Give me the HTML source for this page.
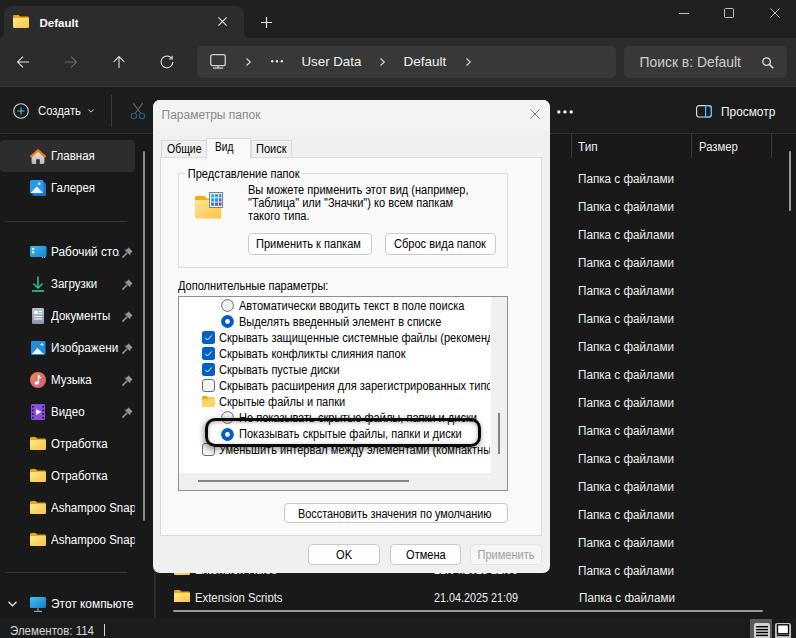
<!DOCTYPE html>
<html><head><meta charset="utf-8">
<style>
*{box-sizing:border-box;margin:0;padding:0}
html,body{width:796px;height:638px;overflow:hidden;background:#1c1c1c;font-family:"Liberation Sans",sans-serif;color:#fff}
.a{position:absolute}
.t{position:absolute;white-space:nowrap;line-height:1}
svg{position:absolute;overflow:visible}
#titlebar{left:0;top:0;width:796px;height:38px;background:#202020}
#tab{left:4px;top:6px;width:240px;height:32px;background:#2c2c2c;border-radius:8px 8px 0 0}
#nav{left:0;top:38px;width:796px;height:48px;background:#2c2c2c}
#addr{left:197px;top:46px;width:419px;height:32px;background:#383838;border-radius:5px}
#search{left:624px;top:46px;width:163px;height:32px;background:#383838;border-radius:5px}
#sepline{left:0;top:85.5px;width:796px;height:1.2px;background:#3c3c3c}
#toolline{left:0;top:133px;width:796px;height:1px;background:#2f2f2f}
.side{font-size:12.5px;color:#fff;transform:scaleX(0.92);transform-origin:0 0}
.row{font-size:12.5px;color:#ededed;transform:scaleX(0.935);transform-origin:0 0}
/* dialog */
#dlg{left:153px;top:100px;width:397px;height:473px;background:#f0f0f0;border-radius:7px;overflow:hidden;color:#000}
.d{position:absolute;white-space:nowrap;line-height:1;color:#000;font-size:12px;transform:scaleX(0.92);transform-origin:0 0}
.btn{position:absolute;background:#fdfdfd;border:1px solid #c9c9c9;border-radius:4px}
</style></head><body>
<div class="a" id="titlebar"></div>
<div class="a" id="tab"></div>
<!-- tab base flares -->
<div class="a" style="left:0;top:30px;width:4px;height:8px;background:#2c2c2c"></div>
<div class="a" style="left:-4px;top:22px;width:8px;height:16px;background:#202020;border-radius:0 0 4px 0"></div>
<div class="a" style="left:244px;top:30px;width:4px;height:8px;background:#2c2c2c"></div>
<div class="a" style="left:244px;top:22px;width:8px;height:16px;background:#202020;border-radius:0 0 0 4px"></div>
<div class="a" id="nav"></div>
<div class="a" id="addr"></div>
<div class="a" id="search"></div>
<div class="a" id="sepline"></div>
<div class="a" id="toolline"></div>
<div class="a" style="left:0;top:134px;width:796px;height:485px;background:#191919"></div>

<!-- tab content -->
<svg style="left:13px;top:15px" width="16" height="13" viewBox="0 0 16 13">
 <defs><linearGradient id="fg" x1="0" y1="0" x2="1" y2="1"><stop offset="0" stop-color="#ffe896"/><stop offset="1" stop-color="#f9c43a"/></linearGradient></defs>
 <path d="M0 1.4Q0 0 1.4 0H5.6L7.2 1.6H14.6Q16 1.6 16 3V5H0Z" fill="#eaa712"/>
 <rect x="0" y="3" width="16" height="10" rx="1.3" fill="url(#fg)"/>
</svg>
<div class="t" style="left:39.5px;top:17.8px;font-size:11.5px;font-weight:bold">Default</div>
<svg style="left:218px;top:17px" width="9" height="9" viewBox="0 0 9 9"><path d="M0.4 0.4L8.6 8.6M8.6 0.4L0.4 8.6" stroke="#e0e0e0" stroke-width="1.15"/></svg>
<svg style="left:261px;top:17px" width="11" height="11" viewBox="0 0 11 11"><path d="M5.5 0V11M0 5.5H11" stroke="#e0e0e0" stroke-width="1.2"/></svg>

<!-- window controls -->
<svg style="left:679px;top:13px" width="10" height="1" viewBox="0 0 10 1"><path d="M0 0.5H10" stroke="#bdbdbd" stroke-width="1"/></svg>
<svg style="left:724px;top:8px" width="10" height="10" viewBox="0 0 10 10"><rect x="0.5" y="0.5" width="9" height="9" rx="1" fill="none" stroke="#bdbdbd" stroke-width="1"/></svg>
<svg style="left:770px;top:8px" width="10" height="10" viewBox="0 0 10 10"><path d="M0.3 0.3L9.7 9.7M9.7 0.3L0.3 9.7" stroke="#bdbdbd" stroke-width="0.95"/></svg>

<!-- nav icons -->
<svg style="left:17px;top:56px" width="12" height="12" viewBox="0 0 12 12"><path d="M0.6 6H12M6 0.6L0.6 6L6 11.4" fill="none" stroke="#e8e8e8" stroke-width="1.05"/></svg>
<svg style="left:65px;top:56px" width="12" height="12" viewBox="0 0 12 12"><path d="M0 6H11.4M6 0.6L11.4 6L6 11.4" fill="none" stroke="#6a6a6a" stroke-width="1.05"/></svg>
<svg style="left:113px;top:56px" width="12" height="12" viewBox="0 0 12 12"><path d="M6 0.6V12M0.6 6L6 0.6L11.4 6" fill="none" stroke="#e8e8e8" stroke-width="1.05"/></svg>
<svg style="left:160px;top:55px" width="14" height="14" viewBox="0 0 14 14"><path d="M11.6 3.2A5.9 5.9 0 1 0 12.9 7" fill="none" stroke="#e8e8e8" stroke-width="1.05"/><path d="M12.2 0.8V3.9H9.1" fill="none" stroke="#e8e8e8" stroke-width="1.05"/></svg>

<!-- address -->
<svg style="left:210px;top:54px" width="16" height="15" viewBox="0 0 16 15"><rect x="0.7" y="0.7" width="14.6" height="11" rx="2" fill="none" stroke="#d0d0d0" stroke-width="1.3"/><path d="M8 11.7V14M3 14.2H13" stroke="#d0d0d0" stroke-width="1.3"/></svg>
<svg style="left:246px;top:58px" width="5" height="8" viewBox="0 0 5 8"><path d="M0.5 0.5L4.3 4L0.5 7.5" fill="none" stroke="#d8d8d8" stroke-width="1.1"/></svg>
<svg style="left:271px;top:60px" width="12" height="3" viewBox="0 0 12 3"><circle cx="1.2" cy="1.2" r="1.2" fill="#e8e8e8"/><circle cx="6" cy="1.2" r="1.2" fill="#e8e8e8"/><circle cx="10.8" cy="1.2" r="1.2" fill="#e8e8e8"/></svg>
<div class="t" style="left:301.5px;top:55.1px;font-size:13.3px;color:#f2f2f2">User Data</div>
<svg style="left:380px;top:58px" width="5" height="8" viewBox="0 0 5 8"><path d="M0.5 0.5L4.3 4L0.5 7.5" fill="none" stroke="#d8d8d8" stroke-width="1.1"/></svg>
<div class="t" style="left:403.5px;top:55.1px;font-size:13.5px;color:#f2f2f2">Default</div>
<svg style="left:466px;top:58px" width="5" height="8" viewBox="0 0 5 8"><path d="M0.5 0.5L4.3 4L0.5 7.5" fill="none" stroke="#d8d8d8" stroke-width="1.1"/></svg>
<div class="t" style="left:639.5px;top:56.2px;font-size:13.9px;color:#cfcfcf">Поиск в: Default</div>
<svg style="left:762px;top:57px" width="12" height="12" viewBox="0 0 12 12"><circle cx="4.6" cy="4.6" r="3.8" fill="none" stroke="#e0e0e0" stroke-width="1.3"/><path d="M7.4 7.4L11.2 11.2" stroke="#e0e0e0" stroke-width="1.5"/></svg>

<!-- toolbar -->
<svg style="left:13px;top:103px" width="16" height="16" viewBox="0 0 16 16"><circle cx="8" cy="8" r="7.3" fill="none" stroke="#d4d4d4" stroke-width="1.1"/><path d="M8 4.5V11.5M4.5 8H11.5" stroke="#4cc2ff" stroke-width="1"/></svg>
<div class="t" style="left:38.2px;top:105.4px;font-size:12.5px;color:#f4f4f4;transform:scaleX(0.905);transform-origin:0 0">Создать</div>
<svg style="left:88px;top:109.3px" width="6" height="4" viewBox="0 0 6 4"><path d="M0.4 0.5L3 3.2L5.6 0.5" fill="none" stroke="#cfcfcf" stroke-width="1"/></svg>
<div class="a" style="left:111px;top:95px;width:1px;height:32px;background:#3a3a3a"></div>
<svg style="left:130px;top:102px" width="16" height="18" viewBox="0 0 16 18"><path d="M3.2 1.2L10.6 11M12.8 1.2L5.4 11" stroke="#686868" stroke-width="1.1"/><circle cx="3.9" cy="14" r="2.7" fill="none" stroke="#2a6080" stroke-width="1.1"/><circle cx="12" cy="14" r="2.7" fill="none" stroke="#2a6080" stroke-width="1.1"/></svg>
<svg style="left:557px;top:109.5px" width="16" height="4" viewBox="0 0 16 4"><circle cx="1.8" cy="1.9" r="1.7" fill="#f4f4f4"/><circle cx="8" cy="1.9" r="1.7" fill="#f4f4f4"/><circle cx="14.2" cy="1.9" r="1.7" fill="#f4f4f4"/></svg>
<svg style="left:696px;top:105px" width="16" height="13" viewBox="0 0 16 13"><rect x="0.6" y="0.6" width="14.8" height="11.4" rx="2.5" fill="none" stroke="#d8d8d8" stroke-width="1.2"/><path d="M9.6 0.6H13A2.4 2.4 0 0 1 15.4 3V9.6A2.4 2.4 0 0 1 13 12H9.6Z" fill="none" stroke="#4cc2ff" stroke-width="1.2"/></svg>
<div class="t" style="left:720.6px;top:106.4px;font-size:12.5px;color:#f4f4f4;transform:scaleX(0.95);transform-origin:0 0">Просмотр</div>

<!-- sidebar -->
<div class="a" style="left:0;top:140px;width:135px;height:31.5px;background:#2d2d2d;border-radius:4px"></div>
<div class="a" style="left:143px;top:151px;width:2px;height:370px;background:#8c8c8c;border-radius:1px"></div>
<div class="a" style="left:154px;top:134px;width:1.5px;height:485px;background:#2a2a2a"></div>

<!-- home -->
<svg style="left:30px;top:149px" width="16" height="15" viewBox="0 0 16 15"><defs><linearGradient id="hg" x1="0" y1="0" x2="0" y2="1"><stop offset="0" stop-color="#e6e6e6"/><stop offset="1" stop-color="#b8b8b8"/></linearGradient></defs><path d="M1.6 7L8 2L14.4 7V13.6Q14.4 15 13 15H9.8V10.3H6.2V15H3Q1.6 15 1.6 13.6Z" fill="url(#hg)"/><path d="M1.1 7.3L8 1.4L14.9 7.3" fill="none" stroke="#f07a10" stroke-width="2.3" stroke-linecap="round" stroke-linejoin="round"/></svg>
<div class="t side" style="left:51px;top:150.1px">Главная</div>
<!-- gallery -->
<svg style="left:30px;top:180px" width="16" height="16" viewBox="0 0 16 16"><rect x="2.5" y="2.5" width="13.5" height="13.5" rx="1.5" fill="#1f6fc8"/><rect x="0" y="0" width="13.5" height="13.5" rx="1.5" fill="#2b9be8"/><path d="M0.5 13L6.8 6.5L13 13Z" fill="#e8f4ff"/><circle cx="9.3" cy="3.8" r="1.2" fill="#fff"/></svg>
<div class="t side" style="left:51px;top:182.1px">Галерея</div>
<div class="a" style="left:6px;top:221px;width:121px;height:1px;background:#363636"></div>

<!-- desktop -->
<svg style="left:30px;top:245.5px" width="17" height="12" viewBox="0 0 17 12"><defs><linearGradient id="dg" x1="0" y1="0" x2="1" y2="1"><stop offset="0" stop-color="#36c0f0"/><stop offset="1" stop-color="#1680d0"/></linearGradient></defs><rect x="0" y="0" width="16.5" height="11" rx="1.5" fill="url(#dg)"/><rect x="2" y="2" width="2.2" height="2" fill="#fff"/><rect x="2" y="5.3" width="2.2" height="2" fill="#fff"/><rect x="12" y="10.8" width="1" height="1" fill="#ddd"/><rect x="14" y="10.8" width="1" height="1" fill="#ddd"/></svg>
<div class="t side" style="left:51px;top:246.1px;width:71.6px;overflow:hidden;transform:scaleX(0.948)">Рабочий стол</div>
<!-- downloads -->
<svg style="left:32px;top:276px" width="12" height="16" viewBox="0 0 12 16"><path d="M6 0.5V12M1.3 7.5L6 12L10.7 7.5" fill="none" stroke="#2ebd9a" stroke-width="1.6"/><path d="M0 15H12" stroke="#2ebd9a" stroke-width="1.7"/></svg>
<div class="t side" style="left:51px;top:278.1px">Загрузки</div>
<!-- documents -->
<svg style="left:32px;top:308px" width="12" height="16" viewBox="0 0 12 16"><defs><linearGradient id="docg" x1="0" y1="0" x2="0" y2="1"><stop offset="0" stop-color="#b6c3d6"/><stop offset="1" stop-color="#8796ad"/></linearGradient></defs><rect x="0" y="0" width="12" height="16" rx="1.2" fill="url(#docg)"/><rect x="2" y="3" width="4" height="3" fill="#fff"/><rect x="7" y="3" width="3" height="1" fill="#fff"/><rect x="7" y="5" width="3" height="1" fill="#fff"/><rect x="2" y="8" width="8" height="1" fill="#fff"/><rect x="2" y="10.5" width="8" height="1" fill="#fff"/></svg>
<div class="t side" style="left:51px;top:310.1px">Документы</div>
<!-- pictures -->
<svg style="left:30.5px;top:341px" width="15" height="14" viewBox="0 0 15 14"><rect x="0" y="0" width="14.5" height="14" rx="1.3" fill="#1e8ee0"/><path d="M0.8 13L6.5 7L12.5 13Z" fill="#f0f8ff"/><path d="M11 2V5M9.5 3.5H12.5" stroke="#fff" stroke-width="1"/></svg>
<div class="t side" style="left:51px;top:342.1px;width:72px;overflow:hidden;transform:scaleX(0.936)">Изображения</div>
<!-- music -->
<svg style="left:30px;top:372px" width="16" height="16" viewBox="0 0 16 16"><defs><linearGradient id="mg" x1="0" y1="0" x2="1" y2="1"><stop offset="0" stop-color="#f08a4a"/><stop offset="1" stop-color="#c85a8a"/></linearGradient></defs><circle cx="8" cy="8" r="8" fill="url(#mg)"/><path d="M8.5 3.2V10.5" stroke="#fff" stroke-width="1.4"/><path d="M8.5 3.2Q9 5.5 11 6" fill="none" stroke="#fff" stroke-width="1.2"/><ellipse cx="6.8" cy="11" rx="2.1" ry="1.7" fill="#fff"/></svg>
<div class="t side" style="left:51px;top:374.1px">Музыка</div>
<!-- video -->
<svg style="left:31px;top:404px" width="14" height="16" viewBox="0 0 14 16"><rect x="0" y="0" width="14" height="16" rx="1.3" fill="#8b4de0"/><path d="M5 5L10.5 8L5 11Z" fill="#fff"/><g fill="#2a1450"><rect x="1" y="2" width="1.8" height="1.6"/><rect x="1" y="5.6" width="1.8" height="1.6"/><rect x="1" y="9.2" width="1.8" height="1.6"/><rect x="1" y="12.8" width="1.8" height="1.6"/><rect x="11.2" y="2" width="1.8" height="1.6"/><rect x="11.2" y="5.6" width="1.8" height="1.6"/><rect x="11.2" y="9.2" width="1.8" height="1.6"/><rect x="11.2" y="12.8" width="1.8" height="1.6"/></g></svg>
<div class="t side" style="left:51px;top:406.1px">Видео</div>

<!-- pins -->
<svg style="left:121.5px;top:247px" width="11" height="11" viewBox="0 0 11 11"><path d="M6.6 0.4L10.6 4.4L8.4 6.2L8.3 8.6L2.4 2.7L4.8 2.6Z" fill="#8d939b"/><path d="M4.6 6.4L0.9 10.1" stroke="#8d939b" stroke-width="1.5" stroke-linecap="round"/></svg>
<svg style="left:121.5px;top:279px" width="11" height="11" viewBox="0 0 11 11"><path d="M6.6 0.4L10.6 4.4L8.4 6.2L8.3 8.6L2.4 2.7L4.8 2.6Z" fill="#8d939b"/><path d="M4.6 6.4L0.9 10.1" stroke="#8d939b" stroke-width="1.5" stroke-linecap="round"/></svg>
<svg style="left:121.5px;top:311px" width="11" height="11" viewBox="0 0 11 11"><path d="M6.6 0.4L10.6 4.4L8.4 6.2L8.3 8.6L2.4 2.7L4.8 2.6Z" fill="#8d939b"/><path d="M4.6 6.4L0.9 10.1" stroke="#8d939b" stroke-width="1.5" stroke-linecap="round"/></svg>
<svg style="left:121.5px;top:343px" width="11" height="11" viewBox="0 0 11 11"><path d="M6.6 0.4L10.6 4.4L8.4 6.2L8.3 8.6L2.4 2.7L4.8 2.6Z" fill="#8d939b"/><path d="M4.6 6.4L0.9 10.1" stroke="#8d939b" stroke-width="1.5" stroke-linecap="round"/></svg>
<svg style="left:121.5px;top:375px" width="11" height="11" viewBox="0 0 11 11"><path d="M6.6 0.4L10.6 4.4L8.4 6.2L8.3 8.6L2.4 2.7L4.8 2.6Z" fill="#8d939b"/><path d="M4.6 6.4L0.9 10.1" stroke="#8d939b" stroke-width="1.5" stroke-linecap="round"/></svg>
<svg style="left:121.5px;top:407px" width="11" height="11" viewBox="0 0 11 11"><path d="M6.6 0.4L10.6 4.4L8.4 6.2L8.3 8.6L2.4 2.7L4.8 2.6Z" fill="#8d939b"/><path d="M4.6 6.4L0.9 10.1" stroke="#8d939b" stroke-width="1.5" stroke-linecap="round"/></svg>

<!-- folders -->
<svg style="left:30px;top:437px" width="16" height="13" viewBox="0 0 16 13"><path d="M0 1.4Q0 0 1.4 0H5.6L7.2 1.6H14.6Q16 1.6 16 3V5H0Z" fill="#eaa712"/><rect x="0" y="3" width="16" height="10" rx="1.3" fill="url(#fg)"/></svg>
<div class="t side" style="left:51px;top:438.1px">Отработка</div>
<svg style="left:30px;top:469px" width="16" height="13" viewBox="0 0 16 13"><path d="M0 1.4Q0 0 1.4 0H5.6L7.2 1.6H14.6Q16 1.6 16 3V5H0Z" fill="#eaa712"/><rect x="0" y="3" width="16" height="10" rx="1.3" fill="url(#fg)"/></svg>
<div class="t side" style="left:51px;top:470.1px">Отработка</div>
<svg style="left:30px;top:501px" width="16" height="13" viewBox="0 0 16 13"><path d="M0 1.4Q0 0 1.4 0H5.6L7.2 1.6H14.6Q16 1.6 16 3V5H0Z" fill="#eaa712"/><rect x="0" y="3" width="16" height="10" rx="1.3" fill="url(#fg)"/></svg>
<div class="t side" style="left:51px;top:502.1px;width:90.5px;overflow:hidden">Ashampoo Snap</div>
<svg style="left:30px;top:533px" width="16" height="13" viewBox="0 0 16 13"><path d="M0 1.4Q0 0 1.4 0H5.6L7.2 1.6H14.6Q16 1.6 16 3V5H0Z" fill="#eaa712"/><rect x="0" y="3" width="16" height="10" rx="1.3" fill="url(#fg)"/></svg>
<div class="t side" style="left:51px;top:534.1px;width:90.5px;overflow:hidden">Ashampoo Snap</div>
<div class="a" style="left:6px;top:572px;width:121px;height:1px;background:#363636"></div>

<svg style="left:8px;top:601px" width="9" height="6" viewBox="0 0 9 6"><path d="M0.5 0.7L4.5 4.8L8.5 0.7" fill="none" stroke="#e0e0e0" stroke-width="1.3"/></svg>
<svg style="left:30px;top:597px" width="16" height="15" viewBox="0 0 16 15"><defs><linearGradient id="pcg" x1="0" y1="0" x2="1" y2="1"><stop offset="0" stop-color="#3cc8f0"/><stop offset="1" stop-color="#1478c8"/></linearGradient></defs><rect x="0" y="0" width="16" height="11" rx="1.2" fill="url(#pcg)"/><path d="M8 11V14M4 14.3H12" stroke="#9a9a9a" stroke-width="1.2"/></svg>
<div class="t side" style="left:51px;top:598.1px;width:87.1px;overflow:hidden;transform:scaleX(0.953)">Этот компьютер</div>

<!-- content -->
<div class="a" style="left:571px;top:134px;width:1px;height:24px;background:#3a3a3a"></div>
<div class="a" style="left:691px;top:134px;width:1px;height:24px;background:#3a3a3a"></div>
<div class="a" style="left:771px;top:134px;width:1px;height:24px;background:#3a3a3a"></div>
<div class="t row" style="left:578px;top:141.3px;transform:scaleX(0.95)">Тип</div>
<div class="t row" style="left:698.5px;top:141.3px;transform:scaleX(0.905)">Размер</div>
<div class="a" style="left:789px;top:151px;width:2px;height:60px;background:#9a9a9a;border-radius:1px"></div>

<div class="t row" style="left:578px;top:172.5px">Папка с файлами</div>
<div class="t row" style="left:578px;top:200.5px">Папка с файлами</div>
<div class="t row" style="left:578px;top:228.5px">Папка с файлами</div>
<div class="t row" style="left:578px;top:256.5px">Папка с файлами</div>
<div class="t row" style="left:578px;top:284.5px">Папка с файлами</div>
<div class="t row" style="left:578px;top:312.5px">Папка с файлами</div>
<div class="t row" style="left:578px;top:340.5px">Папка с файлами</div>
<div class="t row" style="left:578px;top:368.5px">Папка с файлами</div>
<div class="t row" style="left:578px;top:396.5px">Папка с файлами</div>
<div class="t row" style="left:578px;top:424.5px">Папка с файлами</div>
<div class="t row" style="left:578px;top:452.5px">Папка с файлами</div>
<div class="t row" style="left:578px;top:480.5px">Папка с файлами</div>
<div class="t row" style="left:578px;top:508.5px">Папка с файлами</div>
<div class="t row" style="left:578px;top:536.5px">Папка с файлами</div>
<div class="t row" style="left:578px;top:564.5px">Папка с файлами</div>
<div class="a" style="left:160px;top:134px;width:636px;height:468px;overflow:hidden">
 <svg style="left:14px;top:428px" width="16" height="13" viewBox="0 0 16 13"><path d="M0 1.4Q0 0 1.4 0H5.6L7.2 1.6H14.6Q16 1.6 16 3V5H0Z" fill="#eaa712"/><rect x="0" y="3" width="16" height="10" rx="1.3" fill="url(#fg)"/></svg>
 <div class="t row" style="left:34.5px;top:430.3px;transform:scaleX(0.906)">Extension Rules</div>
 <div class="t row" style="left:273.5px;top:430.3px;transform:scaleX(0.863)">21.04.2025 21:09</div>
 <svg style="left:14px;top:456px" width="16" height="13" viewBox="0 0 16 13"><path d="M0 1.4Q0 0 1.4 0H5.6L7.2 1.6H14.6Q16 1.6 16 3V5H0Z" fill="#eaa712"/><rect x="0" y="3" width="16" height="10" rx="1.3" fill="url(#fg)"/></svg>
 <div class="t row" style="left:34.5px;top:457.8px;transform:scaleX(0.906)">Extension Scripts</div>
 <div class="t row" style="left:273.5px;top:457.8px;transform:scaleX(0.863)">21.04.2025 21:09</div>
 <div class="t row" style="left:418.5px;top:457.8px">Папка с файлами</div>
</div>
<div class="a" style="left:173px;top:609.5px;width:590px;height:2.5px;background:#9a9a9a;border-radius:1px"></div>

<!-- status -->
<div class="t" style="left:10px;top:624.9px;font-size:12.5px;color:#d8d8d8;transform:scaleX(0.92);transform-origin:0 0">Элементов: 114</div>
<div class="a" style="left:104px;top:624px;width:1px;height:12px;background:#d8d8d8"></div>
<div class="a" style="left:750px;top:619px;width:22px;height:19px;background:#5a5a5a"></div>
<svg style="left:754px;top:623px" width="16" height="15" viewBox="0 0 16 15"><rect x="0" y="0" width="16" height="16" rx="2.2" fill="#d2d2d2"/><g fill="#000"><rect x="2" y="3" width="12" height="1.4"/><rect x="2" y="5.9" width="12" height="1.4"/><rect x="2" y="8.8" width="12" height="1.4"/><rect x="2" y="11.7" width="12" height="1.4"/></g></svg>
<svg style="left:775px;top:623px" width="16" height="15" viewBox="0 0 16 15"><rect x="0" y="0" width="16" height="16" rx="2.2" fill="#c4c4c4"/><rect x="2.5" y="1.8" width="11" height="9" fill="#fff" stroke="#000" stroke-width="1.3"/><rect x="2" y="11.8" width="12" height="1.3" fill="#000"/></svg>

<!-- dialog -->
<div class="a" id="dlg">
  <div class="a" style="left:0;top:0;width:397px;height:30px;background:#f3f3f3"></div>
  <div class="d" style="left:8.5px;top:9.3px;font-size:12px;color:#8a8a8a;transform:none">Параметры папок</div>
  <svg style="left:377px;top:9px" width="10" height="10" viewBox="0 0 10 10"><path d="M0.3 0.3L9.7 9.7M9.7 0.3L0.3 9.7" stroke="#777" stroke-width="1"/></svg>
  <!-- tabs -->
  <div class="a" style="left:8.4px;top:40px;width:45.5px;height:18px;background:#f0f0f0;border:1px solid #d9d9d9;border-bottom:none"></div>
  <div class="a" style="left:98px;top:40px;width:40.5px;height:18px;background:#f0f0f0;border:1px solid #d9d9d9;border-bottom:none"></div>
  <div class="a" id="panel" style="left:6.6px;top:57.3px;width:382px;height:378.5px;background:#f9f9f9;border:1px solid #dadada"></div>
  <div class="a" style="left:53px;top:37.6px;width:45.4px;height:21px;background:#f9f9f9;border:1px solid #d9d9d9;border-bottom:none"></div>
  <div class="d" style="left:13.8px;top:42.6px;transform:scaleX(0.876)">Общие</div>
  <div class="d" style="left:61.6px;top:40.6px;transform:scaleX(0.85)">Вид</div>
  <div class="d" style="left:103px;top:42.6px;">Поиск</div>
  <!-- group -->
  <div class="a" style="left:25.3px;top:72.9px;width:329.8px;height:95px;border:1px solid #dcdcdc"></div>
  <div class="d" style="left:31.5px;top:67.9px;padding:0 3px;background:#f9f9f9">Представление папок</div>
  <svg style="left:41.9px;top:92px" width="28" height="27" viewBox="0 0 28 27">
   <defs><linearGradient id="fg2" x1="0" y1="0" x2="1" y2="1"><stop offset="0" stop-color="#ffe596"/><stop offset="1" stop-color="#fbc53e"/></linearGradient>
   <linearGradient id="gridg" gradientUnits="userSpaceOnUse" x1="16" y1="2" x2="27" y2="14"><stop offset="0" stop-color="#2ad4e8"/><stop offset="0.5" stop-color="#3a8ad0"/><stop offset="1" stop-color="#6a3cb8"/></linearGradient></defs>
   <path d="M0 5.5Q0 4 1.5 4H9.5L12 6.5H26Q27 6.5 27 8V11H0Z" fill="#f2b000"/>
   <rect x="0" y="8" width="26.2" height="18.5" rx="1.2" fill="url(#fg2)"/>
   <rect x="14.6" y="0.5" width="13" height="15" fill="#fff" stroke="#7d7d7d" stroke-width="1"/>
   <g fill="url(#gridg)"><rect x="16" y="2" width="3.2" height="3.4"/><rect x="19.9" y="2" width="3.2" height="3.4"/><rect x="23.8" y="2" width="2.7" height="3.4"/><rect x="16" y="6.2" width="3.2" height="3.4"/><rect x="19.9" y="6.2" width="3.2" height="3.4"/><rect x="23.8" y="6.2" width="2.7" height="3.4"/><rect x="16" y="10.4" width="3.2" height="3.4"/><rect x="19.9" y="10.4" width="3.2" height="3.4"/><rect x="23.8" y="10.4" width="2.7" height="3.4"/></g>
  </svg>
  <div class="d" style="left:94.5px;top:83.8px">Вы можете применить этот вид (например,</div>
  <div class="d" style="left:94.5px;top:96.5px">"Таблица" или "Значки") ко всем папкам</div>
  <div class="d" style="left:94.5px;top:109.6px">такого типа.</div>
  <div class="btn" style="left:95px;top:133.3px;width:124px;height:21.5px"></div>
  <div class="d" style="left:103px;top:137.8px">Применить к папкам</div>
  <div class="btn" style="left:231.8px;top:133.3px;width:111.2px;height:21.5px"></div>
  <div class="d" style="left:241.2px;top:137.8px">Сброс вида папок</div>
  <div class="d" style="left:25.3px;top:179.8px">Дополнительные параметры:</div>
  <!-- list -->
  <div class="a" style="left:25px;top:196.3px;width:329.5px;height:194.5px;background:#fff;border:1px solid #8b8e96;overflow:hidden">
    <div class="a" style="left:311.5px;top:0;width:17px;height:176px;background:#f0f0f0"></div>
    <div class="a" style="left:318.5px;top:116px;width:2px;height:41px;background:#858585"></div>
    <div class="a" style="left:0;top:175.5px;width:328px;height:17px;background:#f0f0f0"></div>
    <div class="a" style="left:18.5px;top:183px;width:211px;height:2px;background:#858585"></div>
    <div id="items" class="a" style="left:0;top:0;width:310.5px;height:176px;overflow:hidden">
      <svg style="left:42.2px;top:1.7px" width="13" height="13" viewBox="0 0 13 13"><circle cx="6.5" cy="6.5" r="5.9" fill="#f1f1f1" stroke="#6b6b6b" stroke-width="1"/></svg>
      <div class="d" style="left:60.2px;top:2.4px">Автоматически вводить текст в поле поиска</div>
      <svg style="left:42.2px;top:17.7px" width="13" height="13" viewBox="0 0 13 13"><circle cx="6.5" cy="6.5" r="6.4" fill="#005fc4"/><circle cx="6.5" cy="6.5" r="2.4" fill="#fff"/></svg>
      <div class="d" style="left:60.2px;top:18.3px">Выделять введенный элемент в списке</div>
      <svg style="left:23px;top:33.9px" width="13" height="13" viewBox="0 0 13 13"><rect x="0" y="0" width="13" height="13" rx="2.5" fill="#005fc4"/><path d="M3.2 6.8L5.4 9L9.8 4.4" fill="none" stroke="#fff" stroke-width="1"/></svg>
      <div class="d" style="left:39.9px;top:34.4px">Скрывать защищенные системные файлы (рекомендуется)</div>
      <svg style="left:23px;top:49.9px" width="13" height="13" viewBox="0 0 13 13"><rect x="0" y="0" width="13" height="13" rx="2.5" fill="#005fc4"/><path d="M3.2 6.8L5.4 9L9.8 4.4" fill="none" stroke="#fff" stroke-width="1"/></svg>
      <div class="d" style="left:39.9px;top:50.4px">Скрывать конфликты слияния папок</div>
      <svg style="left:23px;top:65.9px" width="13" height="13" viewBox="0 0 13 13"><rect x="0" y="0" width="13" height="13" rx="2.5" fill="#005fc4"/><path d="M3.2 6.8L5.4 9L9.8 4.4" fill="none" stroke="#fff" stroke-width="1"/></svg>
      <div class="d" style="left:39.9px;top:66.4px">Скрывать пустые диски</div>
      <svg style="left:23px;top:81.9px" width="13" height="13" viewBox="0 0 13 13"><rect x="0.5" y="0.5" width="12" height="12" rx="2.5" fill="#f4f4f4" stroke="#6b6b6b" stroke-width="1"/></svg>
      <div class="d" style="left:39.9px;top:82.4px">Скрывать расширения для зарегистрированных типов файлов</div>
      <svg style="left:23px;top:98.7px" width="13" height="11" viewBox="0 0 13 11"><path d="M0 1Q0 0 1 0H4.6L6.2 1.6H12Q13 1.6 13 2.6V4.5H0Z" fill="#eeae08"/><path d="M0 3.2H5L6.4 2.4H13V10Q13 11 12 11H1Q0 11 0 10Z" fill="#fcd660"/></svg>
      <div class="d" style="left:39.9px;top:98.4px">Скрытые файлы и папки</div>
      <svg style="left:42.2px;top:113.7px" width="13" height="13" viewBox="0 0 13 13"><circle cx="6.5" cy="6.5" r="5.9" fill="#f1f1f1" stroke="#6b6b6b" stroke-width="1"/></svg>
      <div class="d" style="left:60.2px;top:114.4px">Не показывать скрытые файлы, папки и диски</div>
      <svg style="left:42.2px;top:130.7px" width="13" height="13" viewBox="0 0 13 13"><circle cx="6.5" cy="6.5" r="6.4" fill="#005fc4"/><circle cx="6.5" cy="6.5" r="2.4" fill="#fff"/></svg>
      <div class="d" style="left:60.2px;top:130.3px">Показывать скрытые файлы, папки и диски</div>
      <svg style="left:23px;top:145.9px" width="13" height="13" viewBox="0 0 13 13"><rect x="0.5" y="0.5" width="12" height="12" rx="2.5" fill="#f4f4f4" stroke="#6b6b6b" stroke-width="1"/></svg>
      <div class="d" style="left:39.9px;top:146.3px">Уменьшить интервал между элементами (компактный вид)</div>
    </div>
    <div class="a" style="left:26.4px;top:120.6px;width:275.2px;height:28.8px;border:3.7px solid #0a0a0a;border-radius:10px;box-shadow:-1px 2px 5px 1px rgba(0,0,0,0.35), inset 0 1px 4px rgba(0,0,0,0.35)"></div>
  </div>
  <!-- footer -->
  <div class="btn" style="left:130.5px;top:402.9px;width:224px;height:20.6px"></div>
  <div class="d" style="left:145.4px;top:407.8px;transform:scaleX(0.905)">Восстановить значения по умолчанию</div>
  <div class="btn" style="left:155.3px;top:443.7px;width:72.1px;height:21px"></div>
  <div class="d" style="left:155.3px;top:448.9px;width:72.1px;text-align:center;transform-origin:50% 0">OK</div>
  <div class="btn" style="left:236.5px;top:443.7px;width:71.8px;height:21px"></div>
  <div class="d" style="left:236.5px;top:448.9px;width:71.8px;text-align:center;transform-origin:50% 0">Отмена</div>
  <div class="btn" style="left:317.4px;top:443.7px;width:72.1px;height:21px;background:#f5f5f5;border-color:#e3e3e3"></div>
  <div class="d" style="left:317.4px;top:448.9px;width:72.1px;text-align:center;color:#a0a0a0;transform-origin:50% 0">Применить</div>
</div>
</body></html>
